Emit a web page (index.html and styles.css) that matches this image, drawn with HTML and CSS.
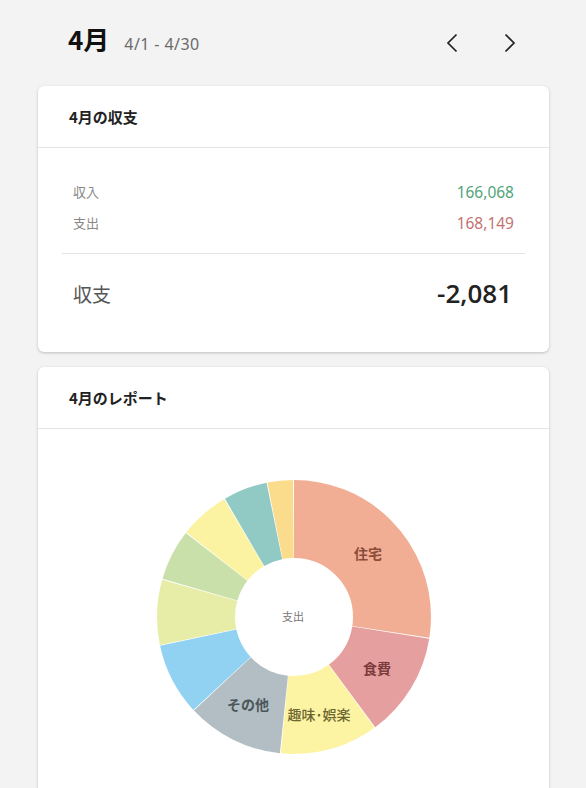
FILE: index.html
```html
<!DOCTYPE html>
<html lang="ja">
<head>
<meta charset="utf-8">
<link rel="stylesheet" href="styles.css">
</head>
<body>
<div class="page">
  <header class="month-bar">
    <div class="month-title">
      <span class="month">4月</span>
      <span class="range">4/1 - 4/30</span>
    </div>
    <div class="nav">
      <svg class="chev" width="12" height="20" viewBox="0 0 12 20"><path d="M10.5 1.5 L2 10 L10.5 18.5" fill="none" stroke="#222" stroke-width="1.7"/></svg>
      <svg class="chev" width="12" height="20" viewBox="0 0 12 20"><path d="M1.5 1.5 L10 10 L1.5 18.5" fill="none" stroke="#222" stroke-width="1.7"/></svg>
    </div>
  </header>

  <section class="card">
    <div class="card-head">4月の収支</div>
    <div class="card-body summary">
      <div class="rows">
        <div class="row"><span class="label">収入</span><span class="val income">166,068</span></div>
        <div class="row"><span class="label">支出</span><span class="val expense">168,149</span></div>
      </div>
      <div class="total">
        <span class="total-label">収支</span>
        <span class="total-val">-2,081</span>
      </div>
    </div>
  </section>

  <section class="card">
    <div class="card-head">4月のレポート</div>
    <div class="card-body chart">
      <svg class="donut" width="276" height="276" viewBox="0 0 276 276">
        <g transform="rotate(-90 138 138)" fill="none" stroke-width="78">
          <circle cx="138" cy="138" r="98" pathLength="360" stroke="#f2ae94" stroke-dasharray="98.8 400" stroke-dashoffset="0"/>
          <circle cx="138" cy="138" r="98" pathLength="360" stroke="#e59f9f" stroke-dasharray="44.4 400" stroke-dashoffset="-99.2"/>
          <circle cx="138" cy="138" r="98" pathLength="360" stroke="#fcf4a2" stroke-dasharray="41.6 400" stroke-dashoffset="-144"/>
          <circle cx="138" cy="138" r="98" pathLength="360" stroke="#b2bec3" stroke-dasharray="40.9 400" stroke-dashoffset="-186"/>
          <circle cx="138" cy="138" r="98" pathLength="360" stroke="#91d1f2" stroke-dasharray="30.5 400" stroke-dashoffset="-227.3"/>
          <circle cx="138" cy="138" r="98" pathLength="360" stroke="#e7eda6" stroke-dasharray="27.7 400" stroke-dashoffset="-258.2"/>
          <circle cx="138" cy="138" r="98" pathLength="360" stroke="#c9e0aa" stroke-dasharray="21.5 400" stroke-dashoffset="-286.3"/>
          <circle cx="138" cy="138" r="98" pathLength="360" stroke="#fcf3a2" stroke-dasharray="21.1 400" stroke-dashoffset="-308.2"/>
          <circle cx="138" cy="138" r="98" pathLength="360" stroke="#91c9c5" stroke-dasharray="18.7 400" stroke-dashoffset="-329.7"/>
          <circle cx="138" cy="138" r="98" pathLength="360" stroke="#fbdc8c" stroke-dasharray="10.8 400" stroke-dashoffset="-348.8"/>
        </g>
        <text class="center-label" x="137" y="142">支出</text>
        <text class="seg-label l-house" x="212" y="80">住宅</text>
        <text class="seg-label l-food" x="221" y="195">食費</text>
        <text class="seg-label l-hobby" x="163" y="241">趣味･娯楽</text>
        <text class="seg-label l-other" x="92" y="231">その他</text>
      </svg>
    </div>
  </section>
</div>
</body>
</html>
```
FILE: styles.css
```css
* { box-sizing: border-box; }
html, body {
  margin: 0;
  padding: 0;
  background: #f3f3f3;
  font-family: "Noto Sans", "Noto Sans CJK JP", sans-serif;
  color: #222;
}
.page {
  width: 586px;
  padding: 0 37px 0 38px;
}
.month-bar {
  height: 86px;
  display: flex;
  align-items: center;
  justify-content: space-between;
  padding: 0 33px 10px 30px;
}
.month-title {
  display: flex;
  align-items: baseline;
  gap: 15px;
}
.month {
  font-size: 26px;
  font-weight: 700;
  color: #111;
  font-family: "Noto Sans CJK JP", sans-serif;
}
.range {
  font-size: 16px;
  letter-spacing: 0.4px;
  color: #6a6a6a;
}
.nav {
  display: flex;
  gap: 46px;
  align-items: center;
  margin-top: 9px;
}
.chev { display: block; }
.card {
  background: #fff;
  border-radius: 6px;
  box-shadow: 0 1px 3px rgba(0,0,0,0.22);
  margin-bottom: 15px;
  overflow: hidden;
}
.card-head {
  height: 62px;
  display: flex;
  align-items: center;
  padding-left: 31px;
  font-size: 15px;
  font-weight: 700;
  font-family: "Noto Sans CJK JP", sans-serif;
  color: #222;
  border-bottom: 1px solid #e4e4e4;
}
.summary {
  padding: 28px 24px 39px;
}
.rows {
  padding: 0 11px 15px;
  border-bottom: 1px solid #e4e4e4;
}
.row {
  display: flex;
  justify-content: space-between;
  align-items: center;
  height: 31px;
}
.label {
  font-size: 13px;
  color: #888;
  font-family: "Noto Sans CJK JP", sans-serif;
}
.val { font-size: 15.5px; }
.income { color: #52a47a; }
.expense { color: #c27373; }
.total {
  display: flex;
  justify-content: space-between;
  align-items: center;
  height: 40px;
  margin-top: 19px;
  padding: 0 13px 0 11px;
}
.total-label {
  font-size: 19px;
  color: #555;
  font-family: "Noto Sans CJK JP", sans-serif;
}
.total-val {
  font-size: 26px;
  font-weight: 600;
  color: #222;
  font-family: "Open Sans", "Noto Sans", sans-serif;
}
.chart {
  display: flex;
  justify-content: center;
  padding-top: 50px;
  height: 430px;
}
.donut { display: block; }
.center-label {
  font-size: 11px;
  fill: #777;
  text-anchor: middle;
  font-family: "Noto Sans CJK JP", sans-serif;
}
.seg-label {
  font-size: 14px;
  font-weight: 700;
  text-anchor: middle;
  font-family: "Noto Sans CJK JP", sans-serif;
}
.l-house { fill: #8c4c3b; }
.l-food { fill: #7b3b3c; }
.l-hobby { fill: #6e6632; font-weight: 500; }
.l-other { fill: #4b565b; }
```
